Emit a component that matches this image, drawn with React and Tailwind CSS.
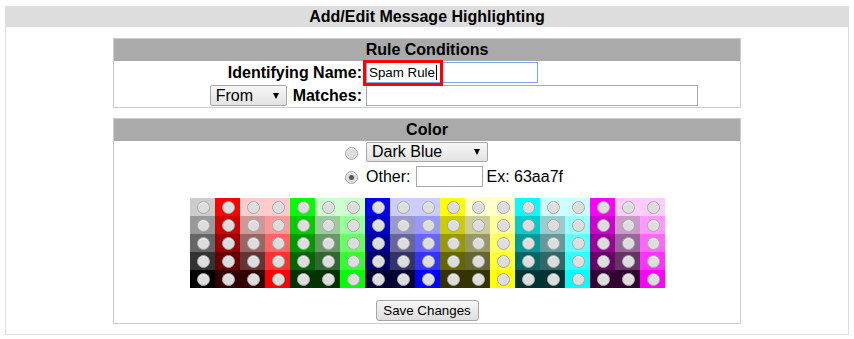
import React from 'react';

// palette rows: light to dark
const on = ['ff', 'cc', '99', '66', '33'];
const off = ['cc', '99', '66', '33', '00'];

// red, green, blue, yellow, cyan, magenta
const hues = [
    [1, 0, 0],
    [0, 1, 0],
    [0, 0, 1],
    [1, 1, 0],
    [0, 1, 1],
    [1, 0, 1],
];

const buildRow = (r) => {
    const row = ['#' + off[r] + off[r] + off[r]];
    hues.forEach((mask) => {
        const pure = mask.map((m) => (m ? on[r] : '00')).join('');
        const desat = mask.map((m) => (m ? on[r] : off[r])).join('');
        const light = mask.map((m) => (m ? 'ff' : off[r])).join('');
        row.push('#' + pure, '#' + desat, '#' + light);
    });
    return row;
};

const palette = [0, 1, 2, 3, 4].map(buildRow);

const Radio = ({ checked }) => (
    <span className="inline-flex items-center justify-center w-[13px] h-[13px] rounded-full border border-[#a8a8a8] bg-[#dddddd] shadow-[inset_0_1px_1px_rgba(255,255,255,0.7)]">
        {checked && <span className="w-[5px] h-[5px] rounded-full bg-[#555555]" />}
    </span>
);

const Select = ({ label, width, height }) => (
    <div
        className={`flex items-center justify-between ${width} ${height} pl-[5px] pr-[7px] border border-[#a6a6a6] rounded-[2px] bg-gradient-to-b from-[#f7f7f7] to-[#e3e3e3] text-[16px]`}
    >
        <span>{label}</span>
        <span className="w-0 h-0 border-l-[3.5px] border-r-[3.5px] border-t-[6px] border-l-transparent border-r-transparent border-t-black" />
    </div>
);

const SectionHeader = ({ children }) => (
    <div className="h-[22px] bg-[#aaaaaa] text-center font-bold text-[16px] leading-[22px]">{children}</div>
);

const App = () => {
    return (
        <div className="min-h-[339px] bg-white pt-[6px] px-[5px] text-black font-['Liberation_Sans',Arial,sans-serif]">
            <div className="border-x border-b border-[#dddddd] pb-[10px]">
                <div className="h-[21px] bg-[#dddddd] text-center font-bold text-[16px] leading-[21px]">
                    Add/Edit Message Highlighting
                </div>

                {/* Rule Conditions */}
                <div className="w-[628px] mx-auto mt-[11px] border border-[#cccccc]">
                    <SectionHeader>Rule Conditions</SectionHeader>
                    <div className="flex flex-col gap-[2px] pt-[1px] pb-[1px]">
                        <div className="flex items-center h-[21px]">
                            <div className="w-[252px] flex justify-end pr-[4px] font-bold text-[16px]">Identifying Name:</div>
                            <div className="relative">
                                <div className="flex items-center w-[172px] h-[21px] pl-[2px] border border-[#7ba7e8] text-[13.333px]">
                                    <span>Spam Rule</span>
                                    <span className="ml-[1px] w-px h-[15px] bg-black" />
                                </div>
                                <div className="absolute left-[-3px] top-[-2px] w-[80px] h-[26px] border-[3px] border-[#ff0000]" />
                            </div>
                        </div>
                        <div className="flex items-center h-[21px]">
                            <div className="w-[252px] flex items-center justify-end gap-[6px] pr-[4px]">
                                <Select label="From" width="w-[77px]" height="h-[21px]" />
                                <span className="font-bold text-[16px]">Matches:</span>
                            </div>
                            <div className="w-[332px] h-[21px] border border-[#a9a9a9]" />
                        </div>
                    </div>
                </div>

                {/* Color */}
                <div className="w-[628px] mx-auto mt-[10px] border border-[#cccccc] pb-[2px]">
                    <SectionHeader>Color</SectionHeader>
                    <div className="pt-[1px]">
                        <div className="flex items-center h-[20px]">
                            <div className="w-[252px] flex justify-end pr-[8px] pt-[3px]">
                                <Radio />
                            </div>
                            <Select label="Dark Blue" width="w-[122px]" height="h-[20px]" />
                        </div>
                        <div className="flex items-center h-[21px] mt-[4px] text-[16px]">
                            <div className="w-[252px] flex justify-end pr-[8px] pt-[2px]">
                                <Radio checked />
                            </div>
                            <span>Other:</span>
                            <div className="ml-[6px] w-[67px] h-[21px] border border-[#a9a9a9]" />
                            <span className="ml-[3px]">Ex: 63aa7f</span>
                        </div>
                    </div>

                    <div className="mt-[11px] mx-auto w-[475px] grid grid-cols-[repeat(19,25px)]">
                        {palette.map((row, r) =>
                            row.map((color, c) => (
                                <div
                                    key={`${r}-${c}`}
                                    className="h-[18px] flex items-center justify-center pl-[2px]"
                                    style={{ backgroundColor: color }}
                                >
                                    <Radio />
                                </div>
                            ))
                        )}
                    </div>

                    <div className="flex justify-center mt-[12px]">
                        <button className="w-[103px] h-[21px] border border-[#a6a6a6] rounded-[3px] bg-gradient-to-b from-[#f7f7f7] to-[#dedede] text-[13.333px] leading-none">
                            Save Changes
                        </button>
                    </div>
                </div>
            </div>
        </div>
    );
};

export default App;
